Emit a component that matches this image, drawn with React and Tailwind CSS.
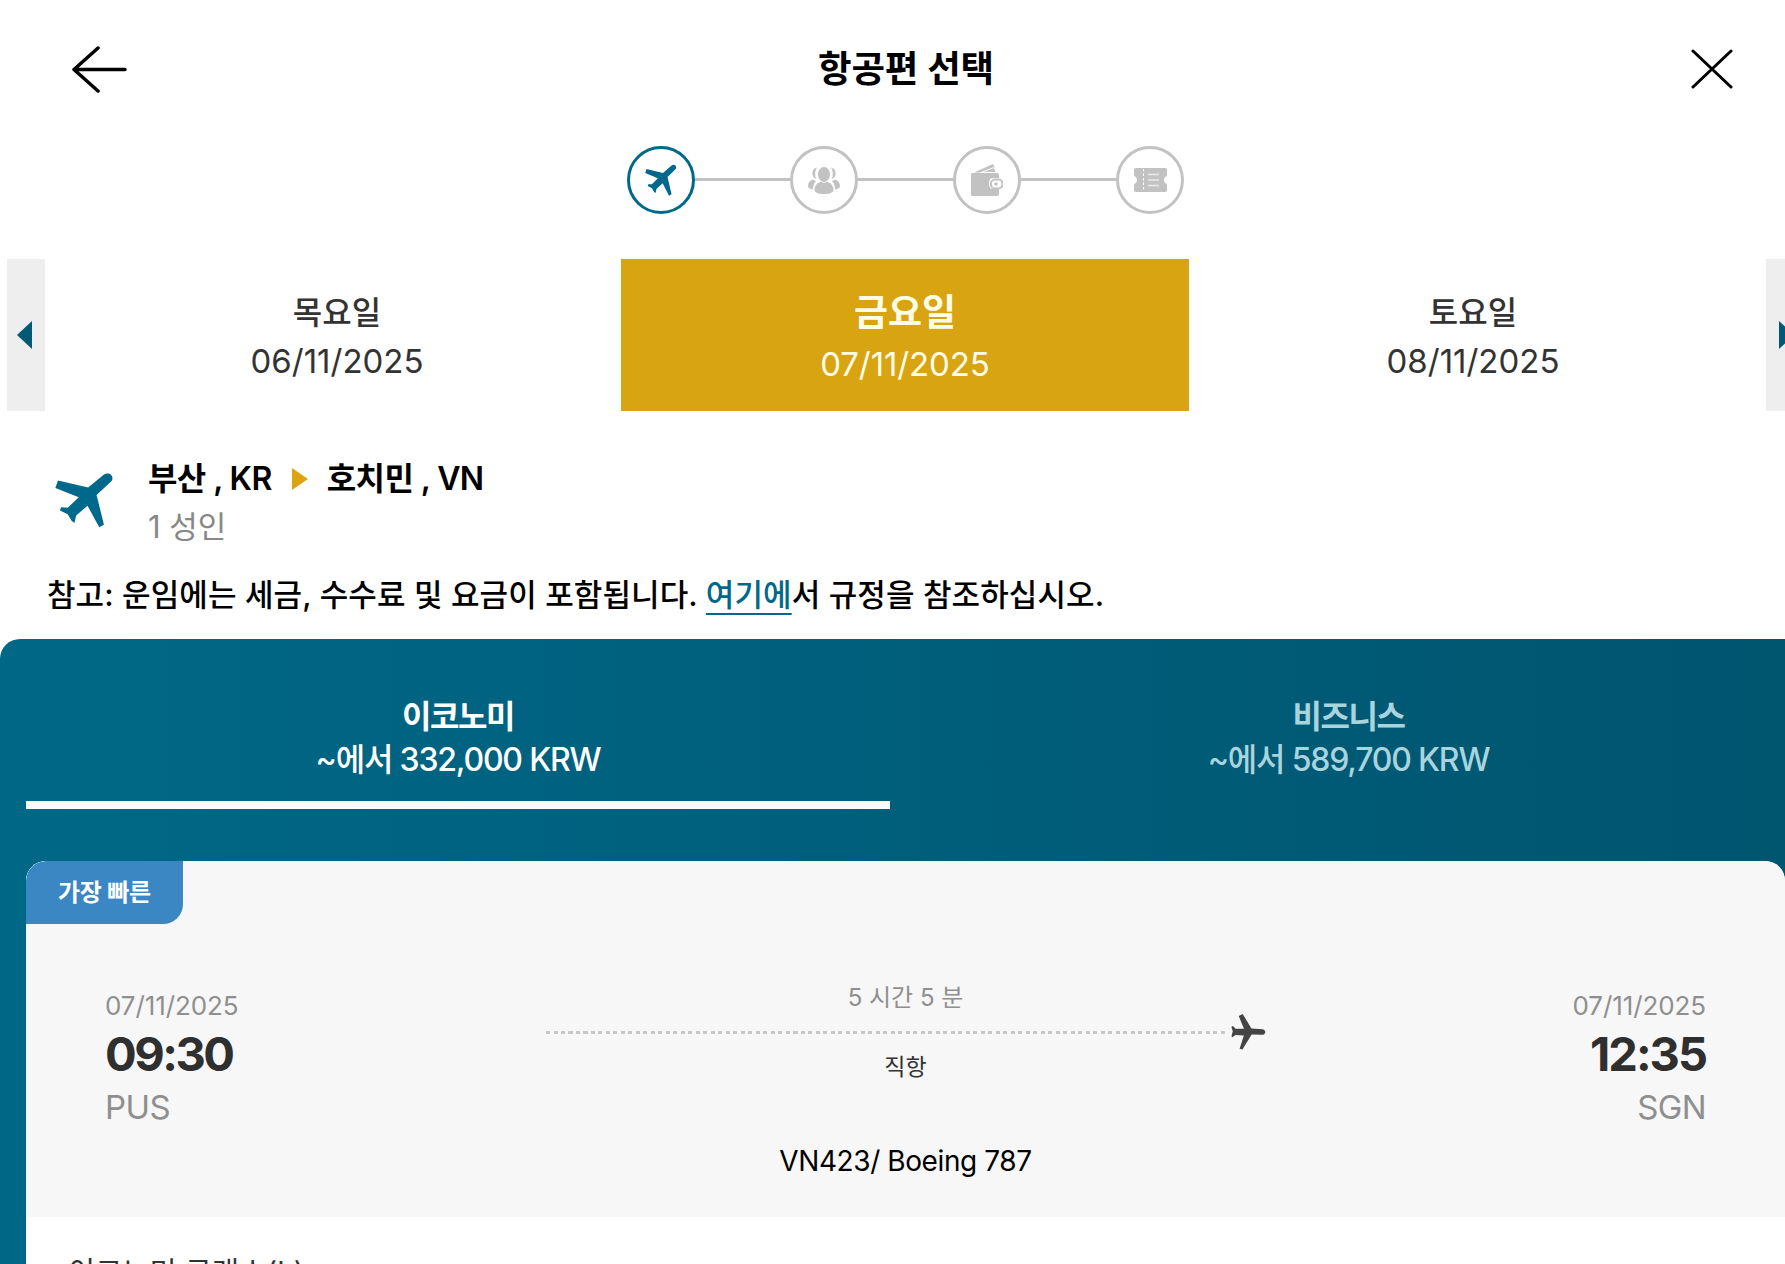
import React from "react";

function PlaneIcon({ className }) {
  return (
    <svg viewBox="28 14 176 176" preserveAspectRatio="none" className={className} fill="currentColor">
      <path d="M174 22C188 12 206 26 197 42L152 86L174 180L160 188L125 120L91 151L86 174L78 168L66 147L43 135L46 125L66 126L99 93L29 64L37 41L127 63Z" />
    </svg>
  );
}

function GroupIcon() {
  return (
    <svg viewBox="0 0 32 27" className="w-8 h-[27px]" fill="#c2c2c2">
      <ellipse cx="16" cy="7.5" rx="6" ry="7.5" />
      <path d="M6.500 23c0-4.500 3-7.200 6.300-8.200 2 1.200 4.400 1.200 6.400 0 3.300 1 6.300 3.700 6.300 8.200 0 2.500-4 4-9.500 4s-9.500-1.500-9.500-4z" />
      <path d="M8.800 .800C5.500 1.200 4 4 4.500 7.500c.3 2.200 1.500 3.800 3.500 4.300-1.200-3.800-1.200-7.600.8-11zM23.200 .800C26.500 1.200 28 4 27.500 7.500c-.3 2.200-1.500 3.800-3.500 4.300 1.200-3.800 1.200-7.600-.8-11z" />
      <path d="M4.800 12.500C2 13.500 0 15.500 0 19c0 2 2 3 4.800 3.400.2-3.700 1.300-6.300 3.400-8.300-1.300-.3-2.500-.9-3.400-1.600zM27.200 12.500c2.800 1 4.800 3 4.800 6.500 0 2-2 3-4.800 3.400-.2-3.700-1.300-6.300-3.400-8.300 1.300-.3 2.500-.9 3.400-1.600z" />
    </svg>
  );
}

function WalletIcon() {
  return (
    <svg viewBox="0 0 32 32" className="w-8 h-8">
      <path d="M3 8.500L22 0l2.500 5L13 8.500z" fill="#c2c2c2" />
      <path d="M10 8.500L23 3.500l2.500 5z" fill="#c2c2c2" stroke="#fff" strokeWidth="1" />
      <path d="M1.500 9H26c1.200 0 2 .8 2 2v3h-6c-2.500 0-4 1.800-4 5.500s1.500 5.500 4 5.500h6v5c0 1.200-.8 2-2 2H1.500C.6 32 0 31.400 0 30.500v-20C0 9.600.6 9 1.500 9z" fill="#c2c2c2" />
      <rect x="20" y="15.500" width="11.500" height="9" rx="4" fill="#fff" stroke="#c2c2c2" strokeWidth="2" />
      <circle cx="25" cy="20" r="1.800" fill="#c2c2c2" />
    </svg>
  );
}

function TicketIcon() {
  return (
    <svg viewBox="0 0 33 24" className="w-[33px] h-6">
      <path d="M2 0h29c1.200 0 2 .8 2 2v6c-1.800.5-3 2-3 4s1.200 3.500 3 4v6c0 1.200-.8 2-2 2H2c-1.200 0-2-.8-2-2v-6c1.800-.5 3-2 3-4s-1.200-3.500-3-4V2C0 .8.800 0 2 0z" fill="#c2c2c2" />
      <path d="M9.500 1v22" stroke="#fff" strokeWidth="1" strokeDasharray="2.500 2" />
      <path d="M14 6.500h11M14 12h11M14 17.500h11" stroke="#e9e9e9" strokeWidth="1.500" />
    </svg>
  );
}

function Step({ active, children }) {
  return (
    <div className={`w-[68px] h-[68px] rounded-full border-[3px] flex items-center justify-center shrink-0 ${active ? "border-[#00688a] text-[#00688a]" : "border-[#c2c2c2]"}`}>
      {children}
    </div>
  );
}

function DayCell({ day, date, active }) {
  if (active) {
    return (
      <div className="w-[568px] h-full bg-[#d9a411] text-[#fffde8] flex flex-col items-center pt-8">
        <div className="text-[37px] leading-[44px] font-bold">{day}</div>
        <div className="text-[33px] leading-[44px] mt-[7px] tracking-[-0.1px]">{date}</div>
      </div>
    );
  }
  return (
    <div className="w-[568px] h-full text-[#333] flex flex-col items-center pt-8">
      <div className="text-[32px] leading-[44px] font-medium">{day}</div>
      <div className="text-[33px] leading-[44px] mt-1">{date}</div>
    </div>
  );
}

export default function App() {
  return (
    <div className="w-[1785px] h-[1264px] overflow-hidden bg-white font-['Inter','Noto_Sans_CJK_KR',sans-serif]">
      <div className="w-[1811px]">
        {/* Header */}
        <header className="h-[139px] pl-[72px] pr-[78px] flex items-center justify-between text-black">
          <svg viewBox="0 0 55 47" className="w-[55px] h-[47px]" fill="none" stroke="currentColor" strokeWidth="3.500" strokeLinecap="round" strokeLinejoin="round">
            <path d="M26 2L2 23.500 26 45M2 23.500h51" />
          </svg>
          <h1 className="mr-[6px] text-[36.500px] leading-none font-semibold tracking-[-0.2px]">항공편 선택</h1>
          <svg viewBox="0 0 42 40" className="w-[42px] h-10 -mt-[2px]" fill="none" stroke="currentColor" strokeWidth="3" strokeLinecap="round">
            <path d="M2 2l38 36M40 2L2 38" />
          </svg>
        </header>

        {/* Steps */}
        <div className="mt-[7px] flex items-center justify-center">
          <Step active><PlaneIcon className="w-8 h-8" /></Step>
          <div className="w-[95px] h-[3px] mb-[2px] bg-[#c2c2c2]" />
          <Step><GroupIcon /></Step>
          <div className="w-[95px] h-[3px] mb-[2px] bg-[#c2c2c2]" />
          <Step><WalletIcon /></Step>
          <div className="w-[95px] h-[3px] mb-[2px] bg-[#c2c2c2]" />
          <Step><TicketIcon /></Step>
        </div>

        {/* Date strip */}
        <div className="mt-[45px] h-[152px] pl-[7px] flex">
          <div className="w-[38px] bg-[#eeeeee] flex items-center pl-[10px]">
            <div className="w-0 h-0 border-y-[14px] border-y-transparent border-r-[15px] border-r-[#005a75]" />
          </div>
          <div className="ml-2 flex">
            <DayCell day="목요일" date="06/11/2025" />
            <DayCell day="금요일" date="07/11/2025" active />
            <DayCell day="토요일" date="08/11/2025" />
          </div>
          <div className="ml-[9px] w-[38px] bg-[#eeeeee] flex items-center pl-[13px]">
            <div className="w-0 h-0 border-y-[14px] border-y-transparent border-l-[15px] border-l-[#005a75]" />
          </div>
        </div>
      </div>

      {/* Route */}
      <div className="mt-[48px] pl-[55px] flex gap-[34px]">
        <PlaneIcon className="w-[59px] h-[56px] mt-[13px] text-[#00688a]" />
        <div>
          <div className="flex items-center h-10 text-[32px] leading-10 font-semibold text-black tracking-[-0.6px]">
            <span>부산 , KR</span>
            <span className="ml-5 mr-[19px] w-0 h-0 border-y-[11px] border-y-transparent border-l-[16px] border-l-[#dba511]" />
            <span>호치민 , VN</span>
          </div>
          <div className="mt-[6px] text-[31px] leading-[44px] text-[#888]">1 성인</div>
        </div>
      </div>

      {/* Note */}
      <p className="mt-6 pl-[47px] text-[31px] leading-[44px] text-black font-medium tracking-[0.1px]">
        참고: 운임에는 세금, 수수료 및 요금이 포함됩니다. <span className="text-[#00688a] underline decoration-2 underline-offset-[7px]">여기에</span>서 규정을 참조하십시오.
      </p>

      {/* Fare panel */}
      <section className="mt-[22px] h-[700px] rounded-tl-[20px] pl-[26px] bg-gradient-to-r from-[#006887] to-[#00556f]">
        <div className="pt-[57px] flex">
          <div className="w-[864px] border-b-8 border-[#f7fcfd] pb-[19px] text-center text-white">
            <div className="text-[32px] leading-10 font-bold tracking-[-1.5px] mt-px">이코노미</div>
            <div className="text-[32px] leading-[44px] font-medium tracking-[-1.2px] mt-px">~에서 332,000 KRW</div>
          </div>
          <div className="ml-7 w-[861px] text-center text-[#a9d4de]">
            <div className="text-[32px] leading-10 font-bold tracking-[-1.5px] mt-px">비즈니스</div>
            <div className="text-[32px] leading-[44px] font-medium tracking-[-1.2px] mt-px">~에서 589,700 KRW</div>
          </div>
        </div>

        <div className="mt-[52px] rounded-t-[20px] overflow-hidden bg-white">
          <div className="bg-[#f7f7f7] h-[356px]">
            <div className="w-[157px] h-[63px] bg-[#3a87c4] rounded-tl-[20px] rounded-br-[20px] flex items-center justify-center text-white text-[24px] font-bold tracking-[-0.2px]">
              가장 빠른
            </div>
            <div className="mt-[57px] px-[79px] grid grid-cols-[1fr_720px_1fr]">
              <div className="pt-2">
                <div className="text-[26px] leading-[34px] text-[#8f8f8f] tracking-[-0.1px]">07/11/2025</div>
                <div className="mt-[2px] text-[47px] leading-[58px] font-bold text-[#2f2f2f] tracking-[-2.5px]">09:30</div>
                <div className="mt-1 text-[33px] leading-10 text-[#8f8f8f] tracking-[-0.6px]">PUS</div>
              </div>
              <div className="flex flex-col items-center">
                <div className="text-[24px] leading-[34px] text-[#8f8f8f]">5 시간 5 분</div>
                <div className="w-full h-[34px] pr-[5px] flex items-center">
                  <div className="flex-1 h-[3px] bg-[repeating-linear-gradient(90deg,#c8c8c8_0_4px,transparent_4px_7.500px)]" />
                  <PlaneIcon className="ml-1 w-8 h-8 rotate-45 text-[#444]" />
                </div>
                <div className="mt-[3px] text-[23px] leading-[30px] text-[#333]">직항</div>
              </div>
              <div className="pt-2 text-right">
                <div className="text-[26px] leading-[34px] text-[#8f8f8f] tracking-[-0.1px]">07/11/2025</div>
                <div className="mt-[2px] text-[47px] leading-[58px] font-bold text-[#2f2f2f] tracking-[-2px]">12:35</div>
                <div className="mt-1 text-[33px] leading-10 text-[#8f8f8f] tracking-[-0.6px]">SGN</div>
              </div>
            </div>
            <div className="mt-[14px] text-center text-[28px] leading-10 text-black tracking-[-0.4px]">VN423/ Boeing 787</div>
          </div>
          <div className="pt-[35px] pl-[42px] text-[29.500px] leading-10 text-[#333]">이코노미 클래스(L)</div>
        </div>
      </section>
    </div>
  );
}
